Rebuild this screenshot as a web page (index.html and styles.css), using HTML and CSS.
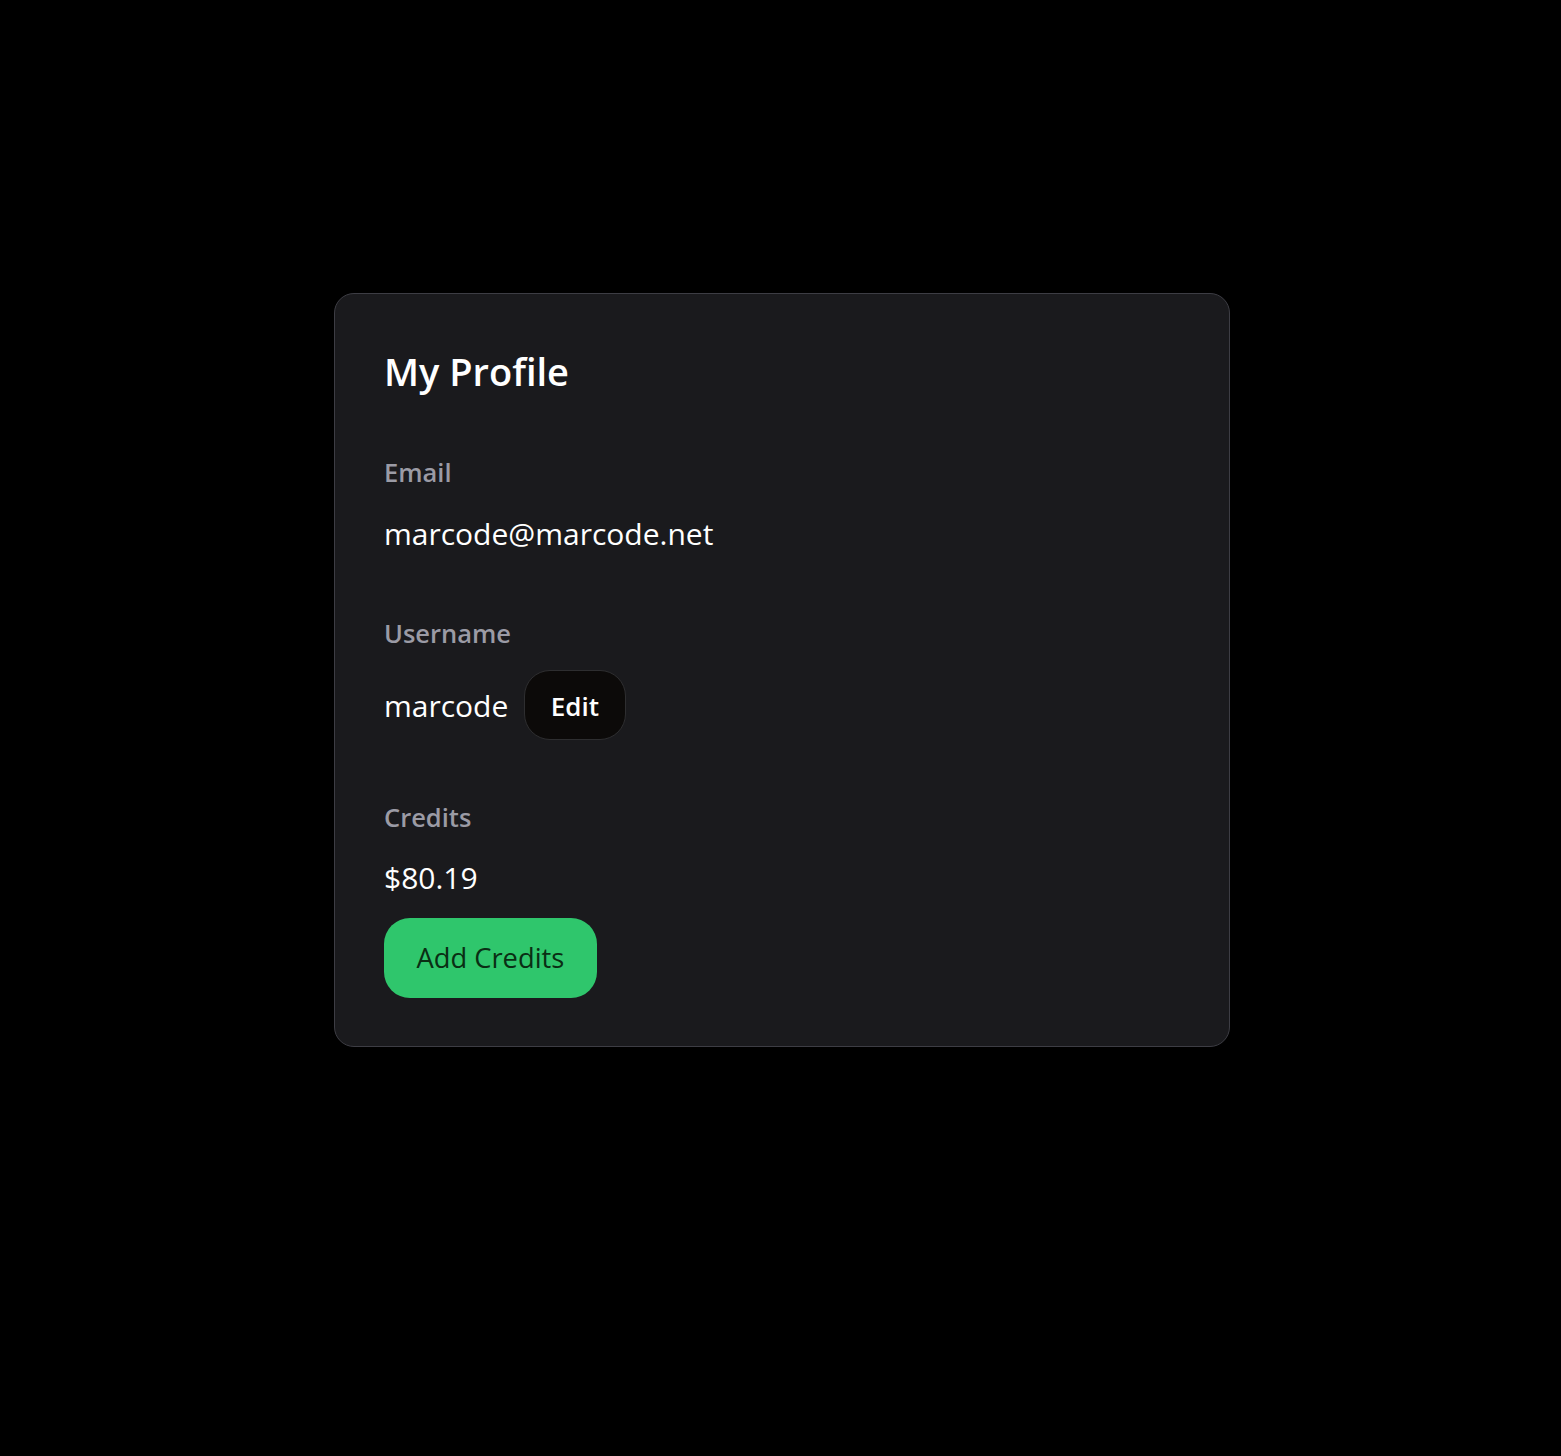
FILE: index.html
```html
<!DOCTYPE html>
<html lang="en">
<head>
<meta charset="utf-8">
<title>My Profile</title>
<link rel="stylesheet" href="styles.css">
</head>
<body>
<main class="page">
  <section class="card">
    <h1 class="title">My Profile</h1>
    <div class="field field-email">
      <div class="label">Email</div>
      <div class="value">marcode@marcode.net</div>
    </div>
    <div class="field field-user">
      <div class="label">Username</div>
      <div class="row">
        <span class="value value-inline">marcode</span>
        <button class="btn-edit" type="button">Edit</button>
      </div>
    </div>
    <div class="field field-credits">
      <div class="label">Credits</div>
      <div class="value">$80.19</div>
      <button class="btn-add" type="button">Add Credits</button>
    </div>
  </section>
</main>
</body>
</html>
```
FILE: styles.css
```css
* { box-sizing: border-box; }
html, body { margin: 0; padding: 0; background: #000; }
body {
  font-family: "Open Sans", "Liberation Sans", sans-serif;
  color: #fff;
  min-height: 1456px;
}
.page {
  display: flex;
  justify-content: center;
  padding-top: 292.5px;
  padding-left: 3px;
}
.card {
  width: 896px;
  background: #1a1a1d;
  border: 1.5px solid #3d3d44;
  border-radius: 20px;
  padding: 48px 48px 48px 49px;
  display: flex;
  flex-direction: column;
  align-items: flex-start;
}
.title {
  margin: 0;
  font-size: 38px;
  font-weight: 600;
  line-height: 58px;
  letter-spacing: 0;
}
.label {
  font-size: 25.5px;
  font-weight: 600;
  line-height: 32px;
  color: #9b9ba5;
}
.value {
  font-size: 30px;
  font-weight: 400;
  line-height: 40px;
  color: #fff;
}
.field-email { margin-top: 56.5px; }
.field-email .value { margin-top: 26px; }
.field-user { margin-top: 62.7px; }
.row {
  margin-top: 21.2px;
  display: flex;
  align-items: center;
  gap: 16px;
  height: 70px;
}
.value-inline { padding-top: 3px; }
.btn-edit {
  height: 70px;
  padding: 3px 25.5px 0;
  background: #0c0a09;
  border: 1.5px solid #2e2e30;
  border-radius: 26px;
  color: #fff;
  font-family: inherit;
  font-size: 26px;
  font-weight: 600;
  line-height: 1;
}
.field-credits {
  margin-top: 60.8px;
  display: flex;
  flex-direction: column;
  align-items: flex-start;
}
.field-credits .value { margin-top: 25.6px; }
.btn-add {
  margin-top: 19.3px;
  height: 80px;
  padding: 0 32.5px;
  background: #2fc66c;
  border: none;
  border-radius: 26px;
  color: #0a2e14;
  font-family: inherit;
  font-size: 27.3px;
  font-weight: 400;
  line-height: 1;
}
```
